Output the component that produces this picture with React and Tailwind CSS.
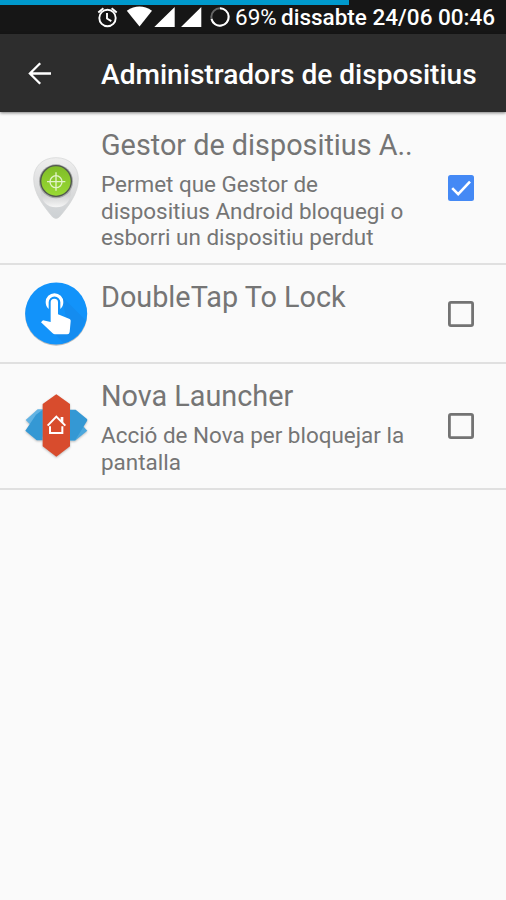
import { useState } from "react";

export default function App() {
  return (
    <div className="h-[900px] w-[506px] overflow-hidden bg-[#fafafa] font-[Roboto,sans-serif]">
      <StatusBar />
      <header className="relative flex h-[78px] items-center bg-[#2d2d2d] text-white shadow-[0_1px_3px_rgba(0,0,0,0.5)]">
        <button className="ml-[28px] w-[73px]" aria-label="Enrere">
          <svg className="h-[23px] w-[23px]" viewBox="0 0 23 23" fill="none" stroke="currentColor" strokeWidth="2.3">
            <path d="M23 11.5H2M12.2 1.2L1.9 11.5l10.3 10.3" />
          </svg>
        </button>
        <h1 className="whitespace-nowrap pt-[3px] text-[28.1px] font-medium leading-[34px]">
          Administradors de dispositius
        </h1>
      </header>
      <main>
        <AdminRow
          height="h-[153px]"
          textTop="pt-[15px]"
          icon={<PinIcon />}
          title="Gestor de dispositius A.."
          text="Permet que Gestor de dispositius Android bloquegi o esborri un dispositiu perdut"
          initial
        />
        <AdminRow height="h-[99px]" textTop="pt-[14px]" icon={<TapIcon />} title="DoubleTap To Lock" />
        <AdminRow
          height="h-[126px]"
          textTop="pt-[14px]"
          icon={<NovaIcon />}
          title="Nova Launcher"
          text="Acció de Nova per bloquejar la pantalla"
        />
      </main>
    </div>
  );
}

function StatusBar() {
  return (
    <div className="relative flex h-[34px] items-center bg-[#161616] text-white">
      <div className="absolute left-0 top-0 h-[5px] w-[349px] bg-[#0099cc]" />
      <svg className="h-[34px] w-[234px] shrink-0" viewBox="0 0 234 34" fill="none">
        <g stroke="#fff" strokeWidth="1.9">
          <circle cx="107.5" cy="18" r="8.2" />
          <path d="M107 13v5.5l4.3 2.6M98.3 12.4l5.1-4.2M116.7 12.4l-5.1-4.2" />
        </g>
        <path d="M126.8 10.7Q139.5 2.3 152 10.7L139.5 26.5Z" fill="#fff" />
        <path d="M154.3 27L174.7 7v20zM181 27L201.3 7v20z" fill="#fff" />
        <circle cx="220" cy="17" r="8.7" stroke="#666" strokeWidth="2" />
        <path d="M220 8.3A8.7 8.7 0 1 1 211.5 19" stroke="#fff" strokeWidth="2" />
      </svg>
      <span className="w-[47px] whitespace-nowrap pl-[1px] text-[22.5px] leading-[30px]">69%</span>
      <span className="whitespace-nowrap text-[22.5px] font-medium leading-[30px]">
        dissabte 24/06 00:46
      </span>
    </div>
  );
}

function AdminRow({ height, textTop, icon, title, text, initial = false }) {
  const [checked, setChecked] = useState(initial);

  return (
    <label className={`flex items-center border-b-2 border-[#e0e0e0] pl-[25px] pr-[32px] ${height}`}>
      {icon}
      <div className={`ml-[13px] h-full w-[347px] shrink-0 text-[#757575] ${textTop}`}>
        <h2 className="whitespace-nowrap text-[28.8px] leading-[36px]">{title}</h2>
        {text && <p className="mt-[8px] w-[320px] text-[22.45px] leading-[26.7px]">{text}</p>}
      </div>
      <input
        type="checkbox"
        className="sr-only"
        checked={checked}
        onChange={(e) => setChecked(e.target.checked)}
      />
      <Checkbox checked={checked} />
    </label>
  );
}

function Checkbox({ checked }) {
  return (
    <svg className="h-[26px] w-[26px] shrink-0" viewBox="0 0 26 26" fill="none">
      {checked ? (
        <>
          <rect width="26" height="26" rx="2.5" fill="#4489f5" />
          <path d="M4.2 13.2l6 6L22 6.6" stroke="#fff" strokeWidth="2.6" />
        </>
      ) : (
        <rect x="1.4" y="1.4" width="23.2" height="23.2" rx="1.6" stroke="#737373" strokeWidth="2.8" />
      )}
    </svg>
  );
}

function PinIcon() {
  return (
    <svg className="h-[63px] w-[63px] shrink-0 overflow-visible" viewBox="30 32 189 189">
      <defs>
        <linearGradient id="pin" x1="0" y1="0" x2="0" y2="1">
          <stop offset="0" stopColor="#eeeeee" />
          <stop offset="0.6" stopColor="#d9dadb" />
          <stop offset="1" stopColor="#cdd1d4" />
        </linearGradient>
        <linearGradient id="pinShade" x1="0" y1="0" x2="0" y2="1">
          <stop offset="0.5" stopColor="#d2d3d4" />
          <stop offset="1" stopColor="#f6f6f6" />
        </linearGradient>
        <linearGradient id="green" x1="0" y1="0" x2="0" y2="1">
          <stop offset="0" stopColor="#80bd28" />
          <stop offset="1" stopColor="#98d933" />
        </linearGradient>
      </defs>
      <path
        d="M123 37C82 37 56 64 56 101c0 44 30 82 57 114q10 9 20 0c27-32 57-70 57-114C190 64 164 37 123 37z"
        fill="url(#pin)"
        stroke="#d2d3d3"
        strokeWidth="2"
      />
      <path d="M77 115v20q3 51 46 51t46-51v-20z" fill="url(#pinShade)" />
      <circle cx="123" cy="108" r="51" fill="#a4a6a5" />
      <circle cx="123" cy="107" r="48" fill="#50564e" />
      <circle cx="123" cy="107" r="44" fill="url(#green)" />
      <g fill="none" stroke="#e2f3c8" strokeWidth="4">
        <circle cx="123" cy="109" r="18" />
        <path d="M123 81v55M96 109h55" />
      </g>
    </svg>
  );
}

function TapIcon() {
  return (
    <svg className="h-[63px] w-[63px] shrink-0 overflow-visible" viewBox="30 35 189 189">
      <circle cx="123.5" cy="133" r="93" fill="#bdbdbd" />
      <circle cx="123.5" cy="129.5" r="93" fill="#1293fa" />
      <path d="M140 78L211 149Q195 205 146 218L120 191 163 190z" fill="#148cf0" />
      <path
        d="M101 116Q92 108 92 95a26.5 26.5 0 0 1 53 0q0 13-9 21V96a17.5 17.5 0 0 0-35 0z"
        fill="#fff"
      />
      <path
        d="M107 96a11 11 0 0 1 22 0v36l35 14q4 2 3 7l-3 32q-1 7-7 7h-37q-4 0-7-3l-35-33 6-6 23 5z"
        fill="#fff"
      />
    </svg>
  );
}

function NovaIcon() {
  return (
    <svg className="h-[63px] w-[63px] shrink-0 overflow-visible drop-shadow-[0_1px_1px_rgba(0,0,0,0.25)]" viewBox="30 44 189 189">
      <path d="M32 119l36-32h22v90z" fill="#62b3e3" />
      <path d="M217 151l-37 30h-20V90z" fill="#4ba7dd" />
      <path d="M31 151l32-48 20-15v92H65z" fill="#3498d4" />
      <path d="M165 88h17l34 28q2 3 0 6l-35 57h-16z" fill="#3498d4" />
      <path d="M124 42l41 29v127l-41 31-41-31V71z" fill="#d84c2d" />
      <path d="M98 136l26-27 27 27M105 138v20h37v-20" fill="none" stroke="#fff" strokeWidth="6" />
      <path d="M137 110h8v18l-8-8z" fill="#fff" />
    </svg>
  );
}
